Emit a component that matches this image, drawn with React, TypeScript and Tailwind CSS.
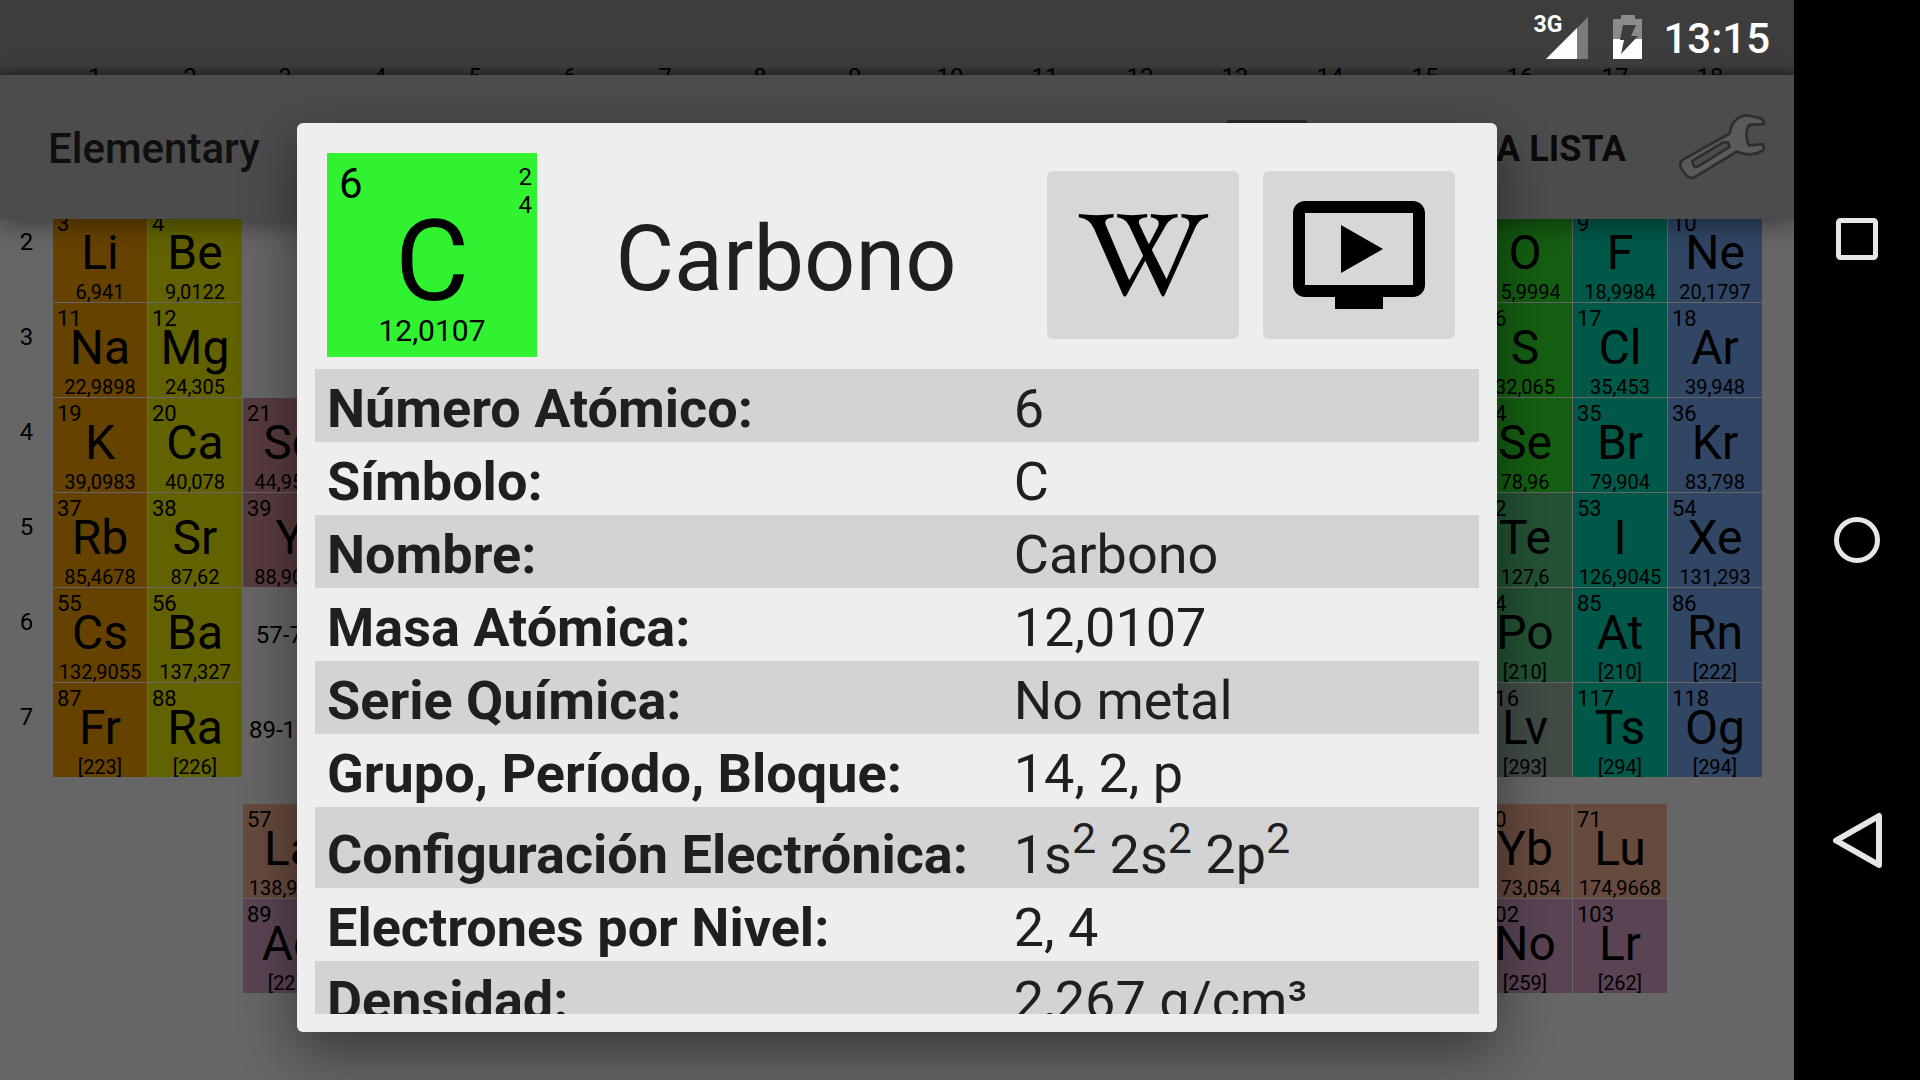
import React from "react";

type Cell = {
  col: number;
  row: number;
  num: string;
  sym: string;
  mass: string;
  tone: keyof typeof tones;
};

const tones = {
  alkali: "bg-[#664200]",
  earth: "bg-[#626200]",
  transition: "bg-[#583c3e]",
  nonmetal: "bg-[#155f12]",
  metalloid: "bg-[#245234]",
  unknown: "bg-[#404b44]",
  halogen: "bg-[#005848]",
  noble: "bg-[#304664]",
  lanthanide: "bg-[#664a3e]",
  actinide: "bg-[#5a4454]",
};

const mainCells: Cell[] = [
  { col: 1, row: 1, num: "3", sym: "Li", mass: "6,941", tone: "alkali" },
  { col: 2, row: 1, num: "4", sym: "Be", mass: "9,0122", tone: "earth" },
  { col: 16, row: 1, num: "8", sym: "O", mass: "15,9994", tone: "nonmetal" },
  { col: 17, row: 1, num: "9", sym: "F", mass: "18,9984", tone: "halogen" },
  { col: 18, row: 1, num: "10", sym: "Ne", mass: "20,1797", tone: "noble" },
  { col: 1, row: 2, num: "11", sym: "Na", mass: "22,9898", tone: "alkali" },
  { col: 2, row: 2, num: "12", sym: "Mg", mass: "24,305", tone: "earth" },
  { col: 16, row: 2, num: "16", sym: "S", mass: "32,065", tone: "nonmetal" },
  { col: 17, row: 2, num: "17", sym: "Cl", mass: "35,453", tone: "halogen" },
  { col: 18, row: 2, num: "18", sym: "Ar", mass: "39,948", tone: "noble" },
  { col: 1, row: 3, num: "19", sym: "K", mass: "39,0983", tone: "alkali" },
  { col: 2, row: 3, num: "20", sym: "Ca", mass: "40,078", tone: "earth" },
  { col: 3, row: 3, num: "21", sym: "Sc", mass: "44,9559", tone: "transition" },
  { col: 16, row: 3, num: "34", sym: "Se", mass: "78,96", tone: "nonmetal" },
  { col: 17, row: 3, num: "35", sym: "Br", mass: "79,904", tone: "halogen" },
  { col: 18, row: 3, num: "36", sym: "Kr", mass: "83,798", tone: "noble" },
  { col: 1, row: 4, num: "37", sym: "Rb", mass: "85,4678", tone: "alkali" },
  { col: 2, row: 4, num: "38", sym: "Sr", mass: "87,62", tone: "earth" },
  { col: 3, row: 4, num: "39", sym: "Y", mass: "88,9059", tone: "transition" },
  { col: 16, row: 4, num: "52", sym: "Te", mass: "127,6", tone: "metalloid" },
  { col: 17, row: 4, num: "53", sym: "I", mass: "126,9045", tone: "halogen" },
  { col: 18, row: 4, num: "54", sym: "Xe", mass: "131,293", tone: "noble" },
  { col: 1, row: 5, num: "55", sym: "Cs", mass: "132,9055", tone: "alkali" },
  { col: 2, row: 5, num: "56", sym: "Ba", mass: "137,327", tone: "earth" },
  { col: 16, row: 5, num: "84", sym: "Po", mass: "[210]", tone: "metalloid" },
  { col: 17, row: 5, num: "85", sym: "At", mass: "[210]", tone: "halogen" },
  { col: 18, row: 5, num: "86", sym: "Rn", mass: "[222]", tone: "noble" },
  { col: 1, row: 6, num: "87", sym: "Fr", mass: "[223]", tone: "alkali" },
  { col: 2, row: 6, num: "88", sym: "Ra", mass: "[226]", tone: "earth" },
  { col: 16, row: 6, num: "116", sym: "Lv", mass: "[293]", tone: "unknown" },
  { col: 17, row: 6, num: "117", sym: "Ts", mass: "[294]", tone: "halogen" },
  { col: 18, row: 6, num: "118", sym: "Og", mass: "[294]", tone: "noble" },
];

const innerCells: Cell[] = [
  { col: 3, row: 1, num: "57", sym: "La", mass: "138,9055", tone: "lanthanide" },
  { col: 16, row: 1, num: "70", sym: "Yb", mass: "173,054", tone: "lanthanide" },
  { col: 17, row: 1, num: "71", sym: "Lu", mass: "174,9668", tone: "lanthanide" },
  { col: 3, row: 2, num: "89", sym: "Ac", mass: "[227]", tone: "actinide" },
  { col: 16, row: 2, num: "102", sym: "No", mass: "[259]", tone: "actinide" },
  { col: 17, row: 2, num: "103", sym: "Lr", mass: "[262]", tone: "actinide" },
];

const ranges = [
  { row: 5, text: "57-71" },
  { row: 6, text: "89-103" },
];

const groups = Array.from({ length: 18 }, (_, i) => String(i + 1));
const periods = ["2", "3", "4", "5", "6", "7"];

const facts: { label: string; value: React.ReactNode; raised?: boolean }[] = [
  { label: "Número Atómico:", value: "6" },
  { label: "Símbolo:", value: "C" },
  { label: "Nombre:", value: "Carbono" },
  { label: "Masa Atómica:", value: "12,0107" },
  { label: "Serie Química:", value: "No metal" },
  { label: "Grupo, Período, Bloque:", value: "14, 2, p" },
  {
    label: "Configuración Electrónica:",
    raised: true,
    value: (
      <>
        1s<Sup>2</Sup> 2s<Sup>2</Sup> 2p<Sup>2</Sup>
      </>
    ),
  },
  { label: "Electrones por Nivel:", value: "2, 4" },
  { label: "Densidad:", value: "2,267 g/cm³" },
];

function Sup({ children }: { children: React.ReactNode }) {
  return <sup className="relative -top-5 align-baseline text-[43px] leading-none">{children}</sup>;
}

function ElementCell({ cell }: { cell: Cell }) {
  return (
    <div
      className={`relative flex h-[94px] flex-col items-center justify-end ${tones[cell.tone]}`}
      style={{ gridColumn: cell.col, gridRow: cell.row }}
    >
      <span className="absolute left-1 top-[5px] text-[22px] leading-[22px]">{cell.num}</span>
      <span className="mb-[11px] text-[48px] leading-9">{cell.sym}</span>
      <span className="text-[20px] leading-5">{cell.mass}</span>
    </div>
  );
}

function StatusBar() {
  return (
    <div className="grid h-[75px] shrink-0 overflow-hidden bg-[#3d3d3d]">
      <div className="grid h-4 grid-cols-18 gap-px self-end bg-linear-to-t from-black/25 to-transparent to-60% pl-12 pr-[37px] [grid-area:1/1]">
        {groups.map((g) => (
          <span key={g} className="pt-1 text-center text-[24px] leading-7">
            {g}
          </span>
        ))}
      </div>
      <div className="flex items-center justify-end pr-6 text-white [grid-area:1/1]">
        <div className="-mt-1 flex items-start">
          <span className="-mr-4 text-[23px] font-bold leading-6">3G</span>
          <svg viewBox="0 0 42 42" className="mt-1 size-[42px]" aria-hidden="true">
            <path d="M42 0V42H0Z" fill="#7b7b7b" />
            <path d="M31 11V42H0Z" fill="#fff" />
          </svg>
        </div>
        <svg viewBox="0 0 29 44" className="-mt-0.5 ml-[25px] h-11 w-[29px]" aria-hidden="true">
          <path d="M8 0h14v4h7v40H0V4h8Z" fill="#8b8b8b" />
          <path d="M0 24h29v20H0Z" fill="#fff" />
          <path d="M10 10h13l-5 11h7L8 39l3-14H7Z" fill="#3d3d3d" />
        </svg>
        <span className="ml-[21px] pt-0.5 text-[42px] font-medium leading-[50px]">13:15</span>
      </div>
    </div>
  );
}

function ActionBar() {
  return (
    <header className="relative z-10 flex h-36 shrink-0 items-center justify-between bg-[#4c4c4c] pl-12 pr-[27px] shadow-[0_6px_24px_rgba(0,0,0,0.4)]">
      <h1 className="pt-1 text-[42px] font-medium leading-[50px] text-[#0f0f0f]">Elementary</h1>
      <div className="flex items-center">
        <span className="mr-[188px] h-[54px] w-[82px] rounded-sm bg-[#2a2a2a]" />
        <button type="button" className="mr-[51px] pt-1 text-[36px] font-bold leading-[42px] text-[#0a0a0a]">
          A LISTA
        </button>
        <button type="button" aria-label="Ajustes" className="pb-0.5">
          <svg viewBox="472 308 270 206" className="h-[69px] w-[90px]" aria-hidden="true">
            <path
              d="M630 372C634 340 656 316 686 318L722 326Q734 330 732 344L688 346Q672 375 688 408L730 404Q736 414 728 424Q690 445 652 426L530 500Q512 512 498 496L484 476Q476 458 494 448Z"
              fill="#5a5a5a"
              stroke="#2e2e2e"
              strokeWidth="8"
              strokeLinejoin="round"
            />
            <path
              d="M518 454L608 400Q628 392 630 412L536 470Q520 478 518 454Z"
              fill="#4c4c4c"
              stroke="#2e2e2e"
              strokeWidth="8"
              strokeLinejoin="round"
            />
          </svg>
        </button>
      </div>
    </header>
  );
}

function PeriodicTable() {
  return (
    <main className="min-h-0 flex-1 overflow-hidden">
      <div className="-mt-[11px] flex pr-8">
        <div className="flex w-[53px] shrink-0 flex-col gap-px">
          {periods.map((p) => (
            <span key={p} className="h-[94px] pt-5 text-center text-[24px] leading-7">
              {p}
            </span>
          ))}
        </div>
        <div className="flex-1">
          <div className="grid grid-cols-18 gap-px">
            {mainCells.map((c) => (
              <ElementCell key={c.num} cell={c} />
            ))}
            {ranges.map((r) => (
              <span
                key={r.text}
                className="self-center pr-2 text-center text-[24px] leading-7"
                style={{ gridColumn: 3, gridRow: r.row }}
              >
                {r.text}
              </span>
            ))}
          </div>
          <div className="mt-[27px] grid grid-cols-18 gap-px">
            {innerCells.map((c) => (
              <ElementCell key={c.num} cell={c} />
            ))}
          </div>
        </div>
      </div>
    </main>
  );
}

function WikipediaMark() {
  return (
    <svg viewBox="233 218 392 252" className="h-[84px] w-[131px]" aria-hidden="true">
      <path
        d="M235 221Q287 228 339 221V231Q310 234 315 252L386 420L428 346L386 256Q374 234 350 231V221Q395 228 440 221V231Q410 233 416 250L445 312L471 262Q484 237 451 231V221Q491 228 531 221V231Q510 233 497 254L454 328L498 417L564 262Q574 234 543 231V221Q583 228 623 221V231Q600 234 587 256L493 463Q488 474 482 463L434 361L379 463Q373 474 367 463L281 266Q268 235 235 231Z"
        fill="#000"
      />
    </svg>
  );
}

function VideoMark() {
  return (
    <svg viewBox="0 0 24 24" className="size-36" aria-hidden="true">
      <path
        d="M21 3H3c-1.11 0-2 .89-2 2v12c0 1.1.89 2 2 2h5v2h8v-2h5c1.1 0 2-.9 2-2V5c0-1.11-.9-2-2-2zm0 14H3V5h18v12zm-5-6l-7 4V7z"
        fill="#000"
      />
    </svg>
  );
}

function ElementDialog() {
  return (
    <section
      role="dialog"
      aria-labelledby="element-name"
      className="flex h-full w-[1200px] max-w-full flex-col rounded-md bg-[#eeeeee] px-[18px] pb-[18px] pt-[30px] text-[#1f1f1f] shadow-[0_20px_56px_rgba(0,0,0,0.45)]"
    >
      <div className="flex items-center px-3">
        <div className="relative flex h-[204px] w-[210px] shrink-0 flex-col items-center bg-[#30f230] pt-[60px] text-black">
          <span className="absolute left-3 top-1.5 text-[42px] leading-[50px]">6</span>
          <span className="absolute right-[5px] top-2.5 text-right text-[24px] leading-7">
            2<br />4
          </span>
          <span className="mb-3 text-[114px] leading-24">C</span>
          <span className="text-[30px] leading-5">12,0107</span>
        </div>
        <h2 id="element-name" className="flex-1 pr-3 pt-2.5 text-center text-[90px] leading-[106px]">
          Carbono
        </h2>
        <div className="flex gap-6 pr-3">
          <button
            type="button"
            aria-label="Wikipedia"
            className="flex h-[168px] w-48 items-center justify-center rounded-md bg-[#d6d8d7]"
          >
            <WikipediaMark />
          </button>
          <button
            type="button"
            aria-label="Video"
            className="flex h-[168px] w-48 items-center justify-center rounded-md bg-[#d6d8d7]"
          >
            <VideoMark />
          </button>
        </div>
      </div>
      <div className="mt-3 min-h-0 flex-1 overflow-hidden">
        <table className="w-full table-fixed text-left text-[54px] leading-[63px]">
          <colgroup>
            <col className="w-[59%]" />
            <col />
          </colgroup>
          <tbody>
            {facts.map((f) => (
              <tr key={f.label} className="align-baseline odd:bg-[#d3d3d3]">
                <th
                  scope="row"
                  className={`whitespace-nowrap px-3 pb-0.5 font-bold ${f.raised ? "pt-4" : "pt-2"}`}
                >
                  {f.label}
                </th>
                <td className={`whitespace-nowrap px-3 pb-0.5 ${f.raised ? "pt-4" : "pt-2"}`}>{f.value}</td>
              </tr>
            ))}
          </tbody>
        </table>
      </div>
    </section>
  );
}

function NavigationBar() {
  return (
    <nav className="flex w-[126px] shrink-0 flex-col items-center justify-center gap-[241px] bg-black">
      <button type="button" aria-label="Recientes">
        <svg viewBox="0 0 60 60" className="size-[60px]" fill="none" stroke="#e6e6e6" strokeWidth="5" aria-hidden="true">
          <rect x="11.5" y="11.5" width="37" height="37" rx="2" />
        </svg>
      </button>
      <button type="button" aria-label="Inicio">
        <svg viewBox="0 0 60 60" className="size-[60px]" fill="none" stroke="#e6e6e6" strokeWidth="5" aria-hidden="true">
          <circle cx="30" cy="30" r="20.5" />
        </svg>
      </button>
      <button type="button" aria-label="Atrás">
        <svg viewBox="0 0 60 60" className="size-[60px]" fill="none" stroke="#e6e6e6" strokeWidth="6" strokeLinejoin="round" aria-hidden="true">
          <path d="M9 29.5L52 5V54Z" />
        </svg>
      </button>
    </nav>
  );
}

export default function App() {
  return (
    <div className="flex h-screen overflow-hidden bg-black font-['Roboto',sans-serif] text-black">
      <div className="relative flex min-w-0 flex-1 flex-col overflow-hidden bg-[#666666]">
        <StatusBar />
        <ActionBar />
        <PeriodicTable />
        <div className="absolute inset-x-0 bottom-0 top-[75px] z-20 flex justify-center overflow-hidden py-12">
          <ElementDialog />
        </div>
      </div>
      <NavigationBar />
    </div>
  );
}
